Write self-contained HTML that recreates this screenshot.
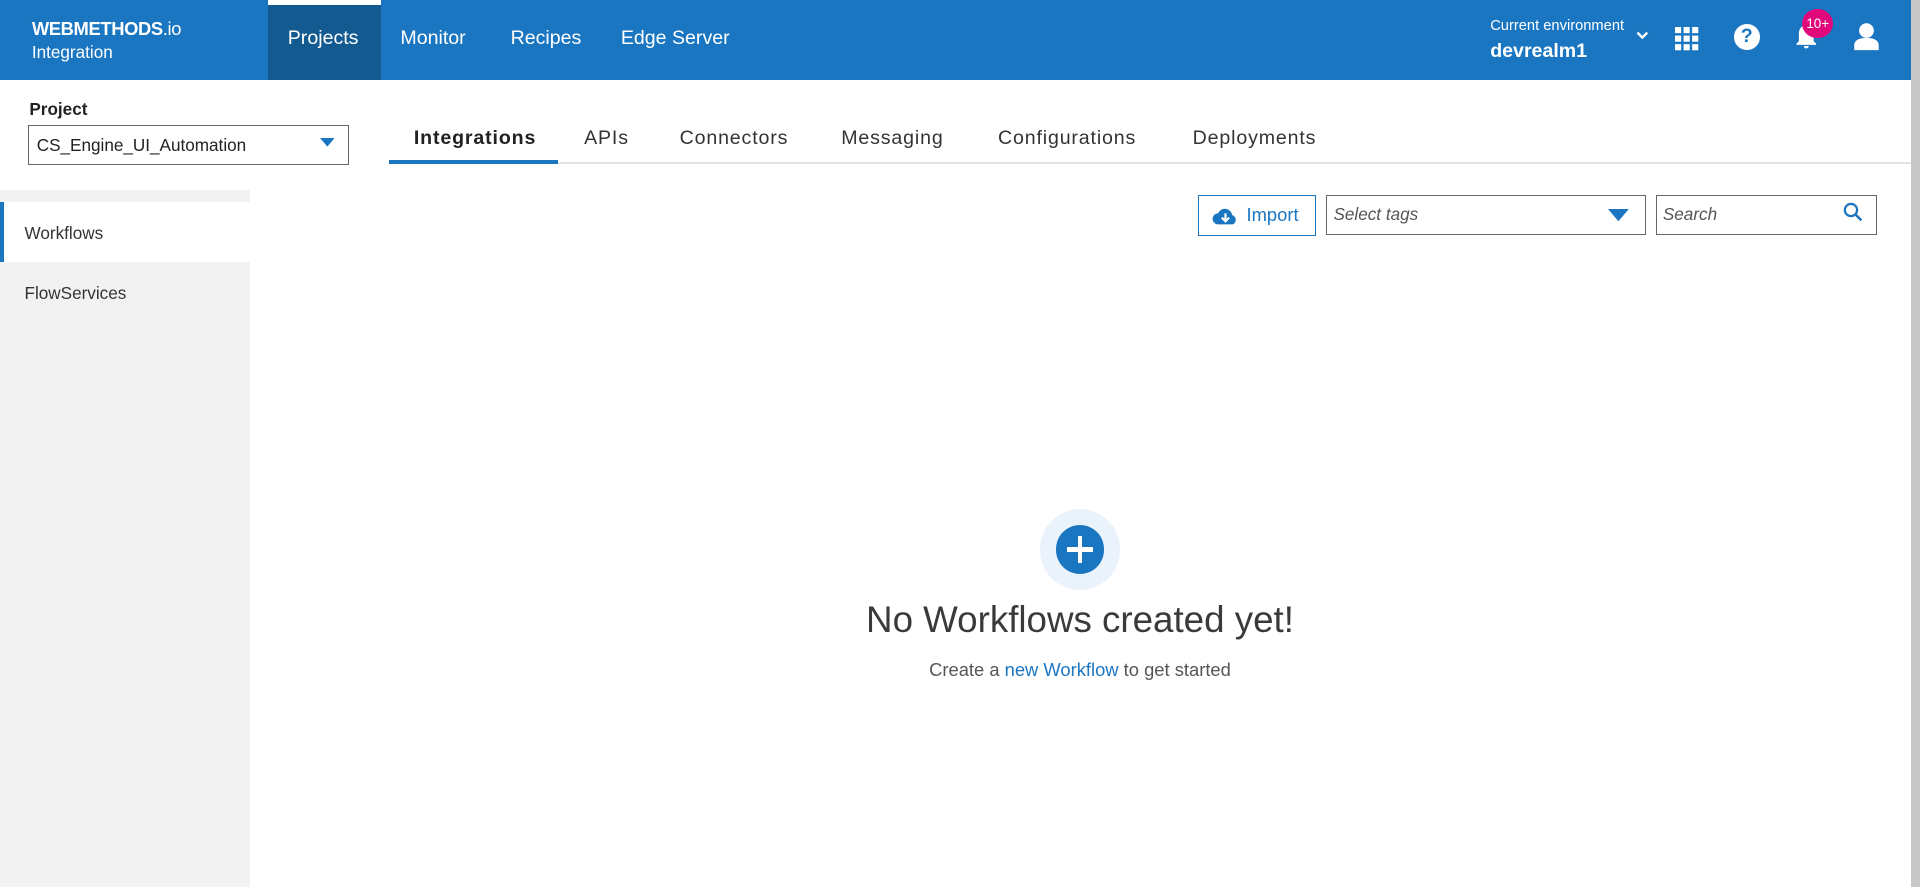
<!DOCTYPE html>
<html><head><meta charset="utf-8"><style>
html{zoom:1.22449}
body{margin:0;width:1568px;height:724px;overflow:hidden;font-family:"Liberation Sans",sans-serif;background:#fff;position:relative;color:#333}
.a{position:absolute}
.hdr{left:0;top:0;width:1561px;height:65px;background:#1b76c1}
.nav{color:#fff;font-size:16px;top:22px}
.tab{font-size:16px;top:104px;letter-spacing:.7px;color:#333}
.box{border:1px solid #666;background:#fff;box-sizing:border-box}
</style></head><body>
<div class="a hdr"></div>
<div class="a" style="left:219px;top:0;width:92px;height:65px;background:#135a91"></div>
<div class="a" style="left:219px;top:0;width:92px;height:4px;background:#fff"></div>
<div class="a" style="left:26px;top:15px;color:#fff;font-size:15px;font-weight:bold;letter-spacing:-.3px">WEBMETHODS<span style="font-weight:normal">.io</span></div>
<div class="a" style="left:26px;top:34px;color:#fff;font-size:14px">Integration</div>
<div class="a nav" style="left:235px">Projects</div>
<div class="a nav" style="left:327px">Monitor</div>
<div class="a nav" style="left:417px">Recipes</div>
<div class="a nav" style="left:507px">Edge Server</div>
<div class="a" style="left:1217px;top:15px;color:#fff;font-size:12px">Current environment</div>
<div class="a" style="left:1217px;top:33px;color:#fff;font-size:16px;font-weight:bold">devrealm1</div>
<svg class="a" style="left:1335px;top:24px" width="12" height="10"><path d="M2 3l4 4 4-4" stroke="#fff" stroke-width="2" fill="none"/></svg>
<svg class="a" style="left:1368px;top:22px" width="20" height="20" fill="#fff"><rect x="0" y="0" width="5" height="5"/><rect x="7" y="0" width="5" height="5"/><rect x="14" y="0" width="5" height="5"/><rect x="0" y="7" width="5" height="5"/><rect x="7" y="7" width="5" height="5"/><rect x="14" y="7" width="5" height="5"/><rect x="0" y="14" width="5" height="5"/><rect x="7" y="14" width="5" height="5"/><rect x="14" y="14" width="5" height="5"/></svg>
<div class="a" style="left:1416px;top:20px;width:21px;height:21px;border-radius:50%;background:#fff;color:#1b76c1;font-weight:bold;font-size:16px;text-align:center;line-height:21px">?</div>
<svg class="a" style="left:1465px;top:20px" width="20" height="22" fill="#fff"><path d="M10 1c-4 0-6 3-6 7v6l-2 2v1h16v-1l-2-2V8c0-4-2-7-6-7zM8 18h4a2 2 0 01-4 0z"/></svg>
<div class="a" style="left:1472px;top:7px;width:25px;height:24px;border-radius:50%;background:#e0087b;color:#fff;font-size:11px;text-align:center;line-height:24px">10+</div>
<svg class="a" style="left:1513px;top:18px" width="22" height="24" fill="#fff"><circle cx="11" cy="7" r="6"/><path d="M1 23v-4c0-4 4-6 10-6s10 2 10 6v4z"/></svg>
<div class="a" style="left:1561px;top:0;width:7px;height:724px;background:#c8c8c8"></div>
<div class="a" style="left:24px;top:81px;font-size:14px;font-weight:bold;color:#222">Project</div>
<div class="a box" style="left:23px;top:102px;width:262px;height:33px"></div>
<div class="a" style="left:30px;top:110px;font-size:14px;color:#222">CS_Engine_UI_Automation</div>
<svg class="a" style="left:261px;top:113px" width="12" height="8"><path d="M0 0h12L6 7z" fill="#1b76c1"/></svg>
<div class="a" style="left:318px;top:132px;width:1243px;height:2px;background:#e2e2e2"></div>
<div class="a" style="left:318px;top:131px;width:138px;height:3px;background:#1b76c1"></div>
<div class="a tab" style="left:338px;font-weight:bold;color:#222">Integrations</div>
<div class="a tab" style="left:477px">APIs</div>
<div class="a tab" style="left:555px">Connectors</div>
<div class="a tab" style="left:687px">Messaging</div>
<div class="a tab" style="left:815px">Configurations</div>
<div class="a tab" style="left:974px">Deployments</div>
<div class="a" style="left:0;top:155px;width:204px;height:569px;background:#f2f2f2"></div>
<div class="a" style="left:0;top:165px;width:204px;height:49px;background:#fff"></div>
<div class="a" style="left:0;top:165px;width:3px;height:49px;background:#1b76c1"></div>
<div class="a" style="left:20px;top:182px;font-size:14px">Workflows</div>
<div class="a" style="left:20px;top:231px;font-size:14px">FlowServices</div>
<div class="a" style="left:978px;top:159px;width:97px;height:34px;border:1px solid #1b76c1;box-sizing:border-box"></div>
<svg class="a" style="left:990px;top:168px" width="22" height="16"><path d="M5 15a4.5 4.5 0 010-9 6 6 0 0111.5 1.5A4 4 0 0117 15z" fill="#1b76c1"/><path d="M11 6v6M8 9.5l3 3 3-3" stroke="#fff" stroke-width="1.8" fill="none"/></svg>
<div class="a" style="left:1018px;top:167px;font-size:15px;color:#1b76c1">Import</div>
<div class="a box" style="left:1083px;top:159px;width:261px;height:33px"></div>
<div class="a" style="left:1089px;top:167px;font-size:14px;font-style:italic;color:#555">Select tags</div>
<svg class="a" style="left:1313px;top:171px" width="17" height="11"><path d="M0 0h17L8.5 10z" fill="#1b76c1"/></svg>
<div class="a box" style="left:1352px;top:159px;width:181px;height:33px"></div>
<div class="a" style="left:1358px;top:167px;font-size:14px;font-style:italic;color:#555">Search</div>
<svg class="a" style="left:1505px;top:165px" width="16" height="17"><circle cx="6.5" cy="6.5" r="5" stroke="#1b76c1" stroke-width="1.8" fill="none"/><path d="M10 10l5 5" stroke="#1b76c1" stroke-width="2"/></svg>
<div class="a" style="left:849px;top:416px;width:66px;height:66px;border-radius:50%;background:#eaf3fb"></div>
<div class="a" style="left:862px;top:429px;width:40px;height:40px;border-radius:50%;background:#1b76c1"></div>
<div class="a" style="left:880px;top:438px;width:4px;height:22px;background:#fff"></div>
<div class="a" style="left:871px;top:447px;width:22px;height:4px;background:#fff"></div>
<div class="a" style="left:582px;top:489px;width:600px;text-align:center;font-size:30px;color:#3a3a3a;font-weight:300">No Workflows created yet!</div>
<div class="a" style="left:582px;top:538px;width:600px;text-align:center;font-size:15px;color:#555">Create a <span style="color:#1b76c1">new Workflow</span> to get started</div>
</body></html>
